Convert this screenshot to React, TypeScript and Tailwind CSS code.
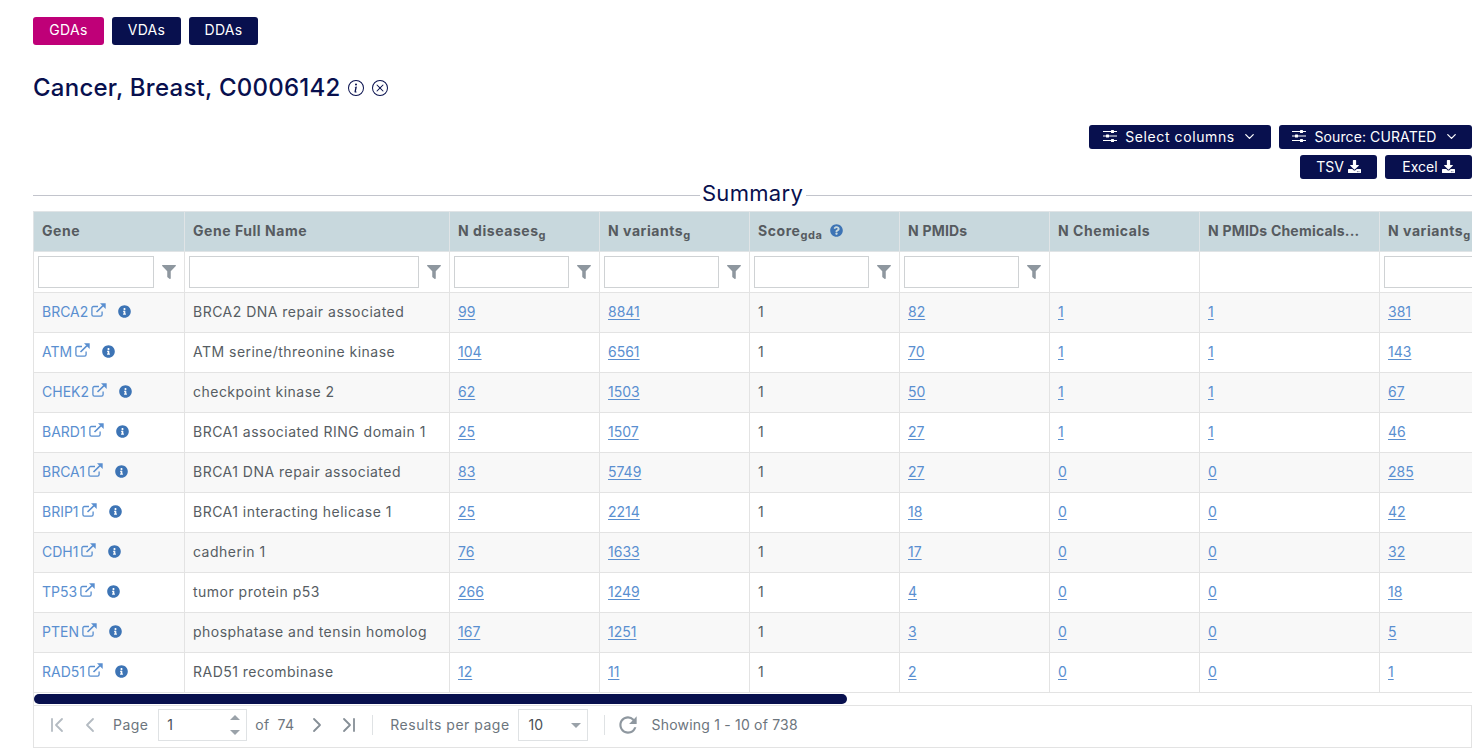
import React from "react";
import { ChevronDown, ChevronFirst, ChevronLast, ChevronLeft, ChevronRight } from "lucide-react";
import { FaInfoCircle, FaQuestionCircle, FaFilter, FaDownload } from "react-icons/fa";
import { BsInfoCircle, BsXCircle } from "react-icons/bs";
import { MdRefresh } from "react-icons/md";

const rows = [
  ["BRCA2", "BRCA2 DNA repair associated", "99", "8841", "82", "1", "1", "381"],
  ["ATM", "ATM serine/threonine kinase", "104", "6561", "70", "1", "1", "143"],
  ["CHEK2", "checkpoint kinase 2", "62", "1503", "50", "1", "1", "67"],
  ["BARD1", "BRCA1 associated RING domain 1", "25", "1507", "27", "1", "1", "46"],
  ["BRCA1", "BRCA1 DNA repair associated", "83", "5749", "27", "0", "0", "285"],
  ["BRIP1", "BRCA1 interacting helicase 1", "25", "2214", "18", "0", "0", "42"],
  ["CDH1", "cadherin 1", "76", "1633", "17", "0", "0", "32"],
  ["TP53", "tumor protein p53", "266", "1249", "4", "0", "0", "18"],
  ["PTEN", "phosphatase and tensin homolog", "167", "1251", "3", "0", "0", "5"],
  ["RAD51", "RAD51 recombinase", "12", "11", "2", "0", "0", "1"],
] as const;

function SlidersIcon() {
  return (
    <svg width="14" height="12" viewBox="0 0 14 12" fill="currentColor" className="shrink-0">
      <rect x="0" y="1" width="14" height="1" />
      <rect x="0" y="5.5" width="14" height="1" />
      <rect x="0" y="10" width="14" height="1" />
      <rect x="8" y="0" width="3" height="3" rx="0.5" />
      <rect x="3" y="4.5" width="3" height="3" rx="0.5" />
      <rect x="8" y="9" width="3" height="3" rx="0.5" />
    </svg>
  );
}

function LinkIcon() {
  return (
    <svg width="15" height="14" viewBox="0 0 15 14" fill="none" className="ml-[3px] -mt-[3px] shrink-0 text-[#5a8fd0]">
      <path d="M7 3.5H2.5A1.6 1.6 0 0 0 .9 5.1v6.4a1.6 1.6 0 0 0 1.6 1.6h7a1.6 1.6 0 0 0 1.6-1.6V8.5" stroke="currentColor" strokeWidth="1.3" />
      <path d="M5.5 9 12 2.6" stroke="currentColor" strokeWidth="1.6" />
      <path d="M9 .3h5.7V6z" fill="currentColor" />
    </svg>
  );
}

function NavButton({ children, active, className }: { children: React.ReactNode; active?: boolean; className: string }) {
  return (
    <button className={`${className} h-7 rounded-[3px] pb-[3px] text-[14px] tracking-[0.3px] text-white ${active ? "bg-[#bf0078]" : "bg-[#08104e]"}`}>
      {children}
    </button>
  );
}

function ToolButton({ children, className }: { children: React.ReactNode; className: string }) {
  return (
    <button className={`${className} flex h-6 items-center justify-center rounded-[3px] bg-[#08104e] pb-[2px] text-[14px] text-white`}>
      {children}
    </button>
  );
}

function Filter({ size }: { size: "first" | "wide" | "normal" }) {
  const w = size === "first" ? "w-[116px]" : size === "wide" ? "w-[230px]" : "w-[115px]";
  return (
    <div className="flex items-center">
      <div className={`h-8 shrink-0 border border-[#cfd2d4] bg-white ${w}`} />
      <FaFilter className="ml-[8px] shrink-0 text-[14px] text-[#8e979f]" />
    </div>
  );
}

const th = "h-10 border border-[#e0e4e6] px-2 pb-[2px] text-left align-middle text-[14px] font-bold tracking-[0.55px] whitespace-nowrap text-[#565b60]";
const thTight = "h-10 border border-[#e0e4e6] px-2 pb-[2px] text-left align-middle text-[14px] font-bold tracking-[0.2px] whitespace-nowrap text-[#565b60]";
const filterCell = "h-[41px] border border-[#e3e3e3] bg-white px-1 align-middle";
const td = "h-10 border border-[#e3e3e3] px-2 pb-[2px] align-middle text-[14px] whitespace-nowrap text-[#565d63]";
const link = "text-[#5a8fd0] underline underline-offset-2";
const sub = "text-[11px]";

export default function App() {
  return (
    <div className="h-[752px] w-[1481px] overflow-hidden bg-white pt-[17px] pr-[9px] pl-[33px]" style={{ fontFamily: "Inter, 'Noto Sans', sans-serif" }}>
      <div className="flex gap-2">
        <NavButton active className="w-[71px]">GDAs</NavButton>
        <NavButton className="w-[69px]">VDAs</NavButton>
        <NavButton className="w-[69px]">DDAs</NavButton>
      </div>

      <div className="mt-[24px] flex h-[38px] items-center text-[#08104e]">
        <h1 className="text-[24px] font-medium tracking-[0.25px]">Cancer, Breast, C0006142</h1>
        <BsInfoCircle className="ml-[7px] text-[16px]" />
        <BsXCircle className="ml-2 text-[16px]" />
      </div>

      <div className="mt-[18px] flex justify-end gap-2">
        <ToolButton className="w-[182px] gap-2 tracking-[0.6px]">
          <SlidersIcon /> Select columns <ChevronDown size={15} className="-ml-px" />
        </ToolButton>
        <ToolButton className="w-[193px] gap-2 tracking-[0.1px]">
          <SlidersIcon /> Source: CURATED <ChevronDown size={15} className="-ml-px" />
        </ToolButton>
      </div>
      <div className="mt-[6px] flex justify-end gap-2">
        <ToolButton className="w-[77px] gap-1">TSV <FaDownload className="text-[13px]" /></ToolButton>
        <ToolButton className="w-[87px] gap-1">Excel <FaDownload className="text-[13px]" /></ToolButton>
      </div>

      <div className="mt-[2px] flex h-[28px] items-center">
        <div className="h-px flex-1 bg-[#c2c4cc]" />
        <div className="-mt-[4px] w-[106px] text-center text-[22px] leading-[28px] tracking-[0.3px] text-[#08104e]">Summary</div>
        <div className="h-px flex-1 bg-[#c2c4cc]" />
      </div>

      <div className="mt-[2px] w-full overflow-hidden">
        <table className="w-[1496px] table-fixed border-collapse">
          <colgroup>
            <col className="w-[151px]" />
            <col className="w-[265px]" />
            <col className="w-[150px]" />
            <col className="w-[150px]" />
            <col className="w-[150px]" />
            <col className="w-[150px]" />
            <col className="w-[150px]" />
            <col className="w-[180px]" />
            <col className="w-[150px]" />
          </colgroup>
          <thead>
            <tr className="bg-[#c8d8dd]">
              <th className={th}>Gene</th>
              <th className={th}>Gene Full Name</th>
              <th className={th}>N diseases<sub className={sub}>g</sub></th>
              <th className={th}>N variants<sub className={sub}>g</sub></th>
              <th className={th}>
                <span className="flex items-center">
                  <span>Score<sub className={sub}>gda</sub></span>
                  <FaQuestionCircle className="ml-2 text-[13px] text-[#3d74b5]" />
                </span>
              </th>
              <th className={thTight}>N PMIDs</th>
              <th className={th}>N Chemicals</th>
              <th className={thTight}>N PMIDs Chemicals...</th>
              <th className={th}>N variants<sub className={sub}>g</sub></th>
            </tr>
            <tr>
              <td className={filterCell}><Filter size="first" /></td>
              <td className={filterCell}><Filter size="wide" /></td>
              <td className={filterCell}><Filter size="normal" /></td>
              <td className={filterCell}><Filter size="normal" /></td>
              <td className={filterCell}><Filter size="normal" /></td>
              <td className={filterCell}><Filter size="normal" /></td>
              <td className={filterCell} />
              <td className={filterCell} />
              <td className={filterCell}><Filter size="normal" /></td>
            </tr>
          </thead>
          <tbody>
            {rows.map((r, i) => (
              <tr key={r[0]} className={i % 2 === 0 ? "bg-[#f8f8f8]" : "bg-white"}>
                <td className={td}>
                  <span className="flex items-center">
                    <span className="text-[#5a8fd0]">{r[0]}</span>
                    <LinkIcon />
                    <FaInfoCircle className="ml-[12px] text-[13px] text-[#3d74b5]" />
                  </span>
                </td>
                <td className={`${td} tracking-[0.48px]`}>{r[1]}</td>
                <td className={td}><a className={link}>{r[2]}</a></td>
                <td className={td}><a className={link}>{r[3]}</a></td>
                <td className={td}>1</td>
                <td className={td}><a className={link}>{r[4]}</a></td>
                <td className={td}><a className={link}>{r[5]}</a></td>
                <td className={td}><a className={link}>{r[6]}</a></td>
                <td className={td}><a className={link}>{r[7]}</a></td>
              </tr>
            ))}
          </tbody>
        </table>
      </div>

      <div className="h-3 border-l border-[#e3e3e3] pt-px">
        <div className="h-[10px] w-[813px] rounded-full bg-[#08104e]" />
      </div>

      <div className="flex h-[43px] items-center border border-[#e3e3e3] pb-[3px] pl-[13px] text-[14px] text-[#6c757d]">
        <span className="flex w-5 justify-center"><ChevronFirst size={24} strokeWidth={1.8} className="-mx-1 shrink-0 text-[#b4bbc2]" /></span>
        <span className="ml-[13px] flex w-5 justify-center"><ChevronLeft size={24} strokeWidth={1.8} className="-mx-1 shrink-0 text-[#b4bbc2]" /></span>
        <span className="ml-[13px] pb-[2px] tracking-[0.45px]">Page</span>
        <div className="relative ml-[10px] flex h-8 w-[89px] items-center border border-[#dfe2e4] pb-[2px] pl-[8px] text-[#495057]">
          1
          <span className="absolute top-[5px] right-[6px] h-0 w-0 border-x-[5px] border-b-[5px] border-x-transparent border-b-[#9aa2a9]" />
          <span className="absolute right-[6px] bottom-[5px] h-0 w-0 border-x-[5px] border-t-[5px] border-x-transparent border-t-[#9aa2a9]" />
        </div>
        <span className="ml-[8px] pb-[2px] tracking-[0.3px]">of</span>
        <span className="ml-[8px] pb-[2px] tracking-[0.3px]">74</span>
        <span className="ml-[13px] flex w-5 justify-center"><ChevronRight size={24} strokeWidth={1.8} className="-mx-1 shrink-0 text-[#858e96]" /></span>
        <span className="ml-[12px] flex w-5 justify-center"><ChevronLast size={24} strokeWidth={1.8} className="-mx-1 shrink-0 text-[#858e96]" /></span>
        <div className="ml-[13px] h-[20px] w-px bg-[#dfe2e4]" />
        <span className="ml-[17px] pb-[2px] tracking-[0.5px]">Results per page</span>
        <div className="relative ml-2 flex h-8 w-[70px] items-center border border-[#dfe2e4] pb-[2px] pl-[10px] text-[#495057]">
          10
          <span className="absolute top-[13px] right-[6px] h-0 w-0 border-x-[5px] border-t-[5px] border-x-transparent border-t-[#9aa2a9]" />
        </div>
        <div className="ml-4 h-[20px] w-px bg-[#dfe2e4]" />
        <span className="ml-[14px] flex w-[18px] justify-center"><MdRefresh size={26} className="-mx-1 shrink-0 text-[#8e979f]" /></span>
        <span className="ml-[15px] pb-[2px] tracking-[0.2px]">Showing 1 - 10 of 738</span>
      </div>
    </div>
  );
}
